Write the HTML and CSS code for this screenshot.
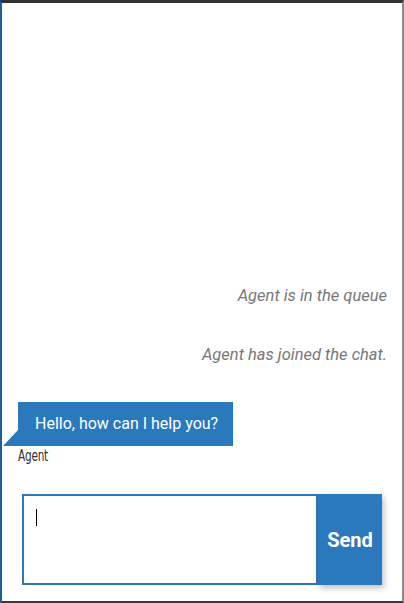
FILE: index.html
```html
<!DOCTYPE html>
<html>
<head>
<meta charset="utf-8">
<link rel="stylesheet" href="styles.css">
</head>
<body>
<div class="frame">
  <div class="messages">
    <div class="status first">Agent is in the queue</div>
    <div class="status second">Agent has joined the chat.</div>
    <div class="msg">
      <div class="bubble">Hello, how can I help you?</div>
      <div class="sender"><span class="sender-name">Agent</span></div>
    </div>
  </div>
  <div class="composer">
    <div class="input"><span class="caret"></span></div>
    <button class="send">Send</button>
  </div>
</div>
</body>
</html>
```

FILE: styles.css
```css
html, body {
  margin: 0;
  padding: 0;
  height: 603px;
  overflow: hidden;
  background: #fff;
}
.frame {
  box-sizing: border-box;
  height: 603px;
  width: 404px;
  border-top: 3px solid #333;
  border-left: 2px solid #1f5d93;
  border-right: 2px solid #8a8a8a;
  border-bottom: 2px solid #2c3e50;
  display: flex;
  flex-direction: column;
  font-family: Roboto, "Liberation Sans", sans-serif;
}
.messages {
  flex: 1;
  display: flex;
  flex-direction: column;
  justify-content: flex-end;
}
.status {
  font-style: italic;
  font-size: 16.5px;
  line-height: 20px;
  color: #777;
  text-align: right;
  padding-right: 15px;
}
.status.second {
  margin-top: 39px;
}
.msg {
  margin-top: 37px;
  padding-left: 16px;
  display: flex;
  flex-direction: column;
  align-items: flex-start;
}
.bubble {
  position: relative;
  background: #2a79bd;
  color: #fff;
  font-size: 16px;
  line-height: 22px;
  padding: 11px 15px 11px 17px;
}
.bubble::before {
  content: "";
  position: absolute;
  left: -15px;
  bottom: 0;
  width: 0;
  height: 0;
  border-style: solid;
  border-width: 0 0 16px 15px;
  border-color: transparent transparent #2a79bd transparent;
}
.sender {
  line-height: 20px;
  height: 20px;
}
.sender-name {
  display: inline-block;
  font-family: "DejaVu Sans Condensed", "DejaVu Sans", sans-serif;
  font-size: 15px;
  color: #333;
  transform: scaleX(0.78);
  transform-origin: left center;
  letter-spacing: -0.3px;
}
.composer {
  display: flex;
  margin: 28px 20px 16px 20px;
  height: 91px;
}
.input {
  flex: none;
  width: 296px;
  box-sizing: border-box;
  border: 2px solid #2a79bd;
  padding: 13px 12px;
  background: #fff;
}
.caret {
  display: block;
  width: 1px;
  height: 17px;
  background: #000;
}
.send {
  flex: none;
  width: 64px;
  border: none;
  background: #2a79bd;
  color: #fff;
  font-family: Roboto, "Liberation Sans", sans-serif;
  font-weight: bold;
  font-size: 20px;
  padding: 0;
  box-shadow: 2px 3px 6px rgba(0,0,0,0.25);
}
```
